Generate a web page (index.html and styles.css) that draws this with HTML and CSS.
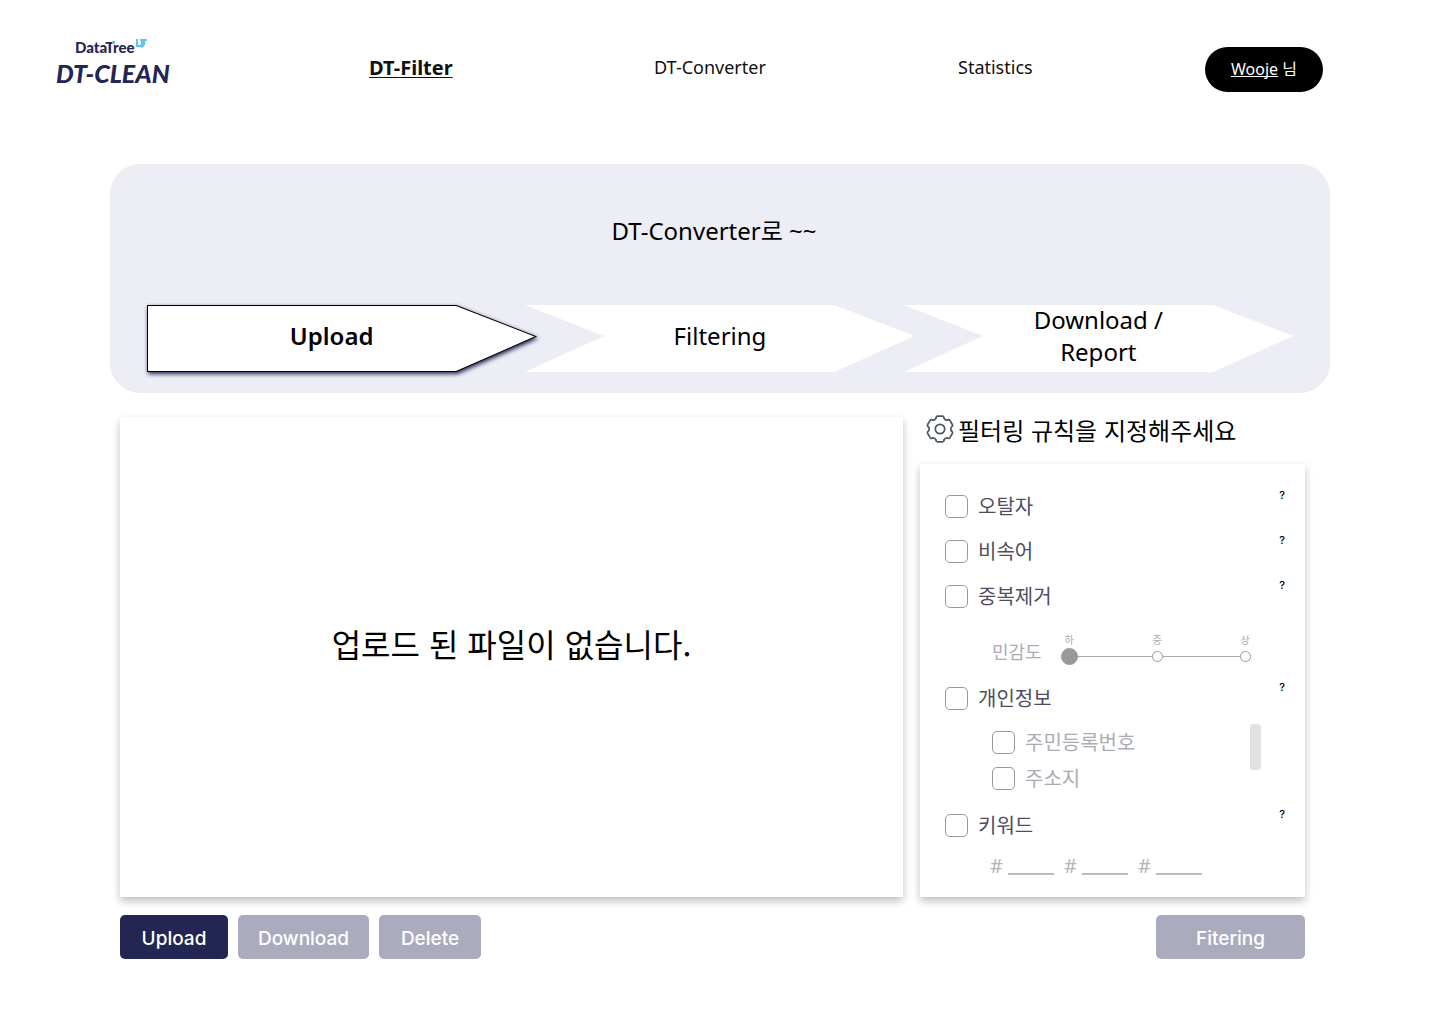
FILE: index.html
```html
<!DOCTYPE html>
<html lang="ko">
<head>
  <meta charset="utf-8">
  <meta name="viewport" content="width=device-width, initial-scale=1">
  <title>DT-Clean</title>
  <link rel="stylesheet" href="styles.css">
</head>
<body>
  <header class="header">
    <a class="logo" href="#">
      <svg width="112" height="48" viewBox="0 0 112 48" role="img" aria-label="DataTree DT-CLEAN">
        <text class="logo-small" x="19" y="16">DataTree</text>
        <text class="logo-large" x="0" y="46">DT-CLEAN</text>
        <path fill="#5bc5ee" d="M56 4h3v3h-3z"/>
        <g fill="none" stroke="#5bc5ee" stroke-width="2">
          <path d="M81 2v7h3q2 0 2-2V4"/>
          <path d="M84 3h7M88 3v4q0 2-3 3"/>
        </g>
      </svg>
    </a>
    <nav class="nav">
      <a class="nav-link nav-link-active" href="#" aria-current="page">DT-Filter</a>
      <a class="nav-link" href="#">DT-Converter</a>
      <a class="nav-link" href="#">Statistics</a>
    </nav>
    <button class="user" type="button"><span class="user-name">Wooje</span> 님</button>
  </header>

  <section class="hero">
    <h1 class="hero-title">DT-Converter로 ~~</h1>
    <ol class="steps">
      <li class="step step-active">
        <svg class="step-shape" viewBox="0 0 389 67" preserveAspectRatio="none" aria-hidden="true"><path d="M.5.5H309L388.5 31.5 309 66.500H.5z"/></svg>
        <span class="step-label">Upload</span>
      </li>
      <li class="step">
        <svg class="step-shape" viewBox="0 0 389 67" preserveAspectRatio="none" aria-hidden="true"><path d="M0 0H309L389 31 309 67H0L79 31z"/></svg>
        <span class="step-label">Filtering</span>
      </li>
      <li class="step">
        <svg class="step-shape" viewBox="0 0 389 67" preserveAspectRatio="none" aria-hidden="true"><path d="M0 0H309L389 31 309 67H0L79 31z"/></svg>
        <span class="step-label">Download /<br>Report</span>
      </li>
    </ol>
  </section>

  <main class="workspace">
    <section class="panel files">
      <p class="files-empty">업로드 된 파일이 없습니다.</p>
    </section>

    <section class="rules">
      <h2 class="rules-title">
        <svg width="28" height="28" viewBox="-14 -14 28 28" fill="none" stroke="#4b5560" stroke-width="1.700" stroke-linecap="round" aria-hidden="true">
          <defs>
            <path id="tooth" d="M-3.970-10.900Q-4.140-12.740-2.270-12.900H2.270Q4.140-12.740 3.970-10.900Q5-8.660 7.450-8.890"/>
          </defs>
          <use href="#tooth"/>
          <use href="#tooth" transform="rotate(60)"/>
          <use href="#tooth" transform="rotate(120)"/>
          <use href="#tooth" transform="rotate(180)"/>
          <use href="#tooth" transform="rotate(240)"/>
          <use href="#tooth" transform="rotate(300)"/>
          <circle r="4.700"/>
        </svg>
        <span class="rules-title-text">필터링 규칙을 지정해주세요</span>
      </h2>
      <form class="panel rules-panel" id="rules-form">
        <div class="rule">
          <label class="check"><input class="check-box" type="checkbox"><span class="check-text">오탈자</span></label>
          <button class="help" type="button" aria-label="오탈자 도움말">?</button>
        </div>
        <div class="rule">
          <label class="check"><input class="check-box" type="checkbox"><span class="check-text">비속어</span></label>
          <button class="help" type="button" aria-label="비속어 도움말">?</button>
        </div>
        <div class="rule">
          <label class="check"><input class="check-box" type="checkbox"><span class="check-text">중복제거</span></label>
          <button class="help" type="button" aria-label="중복제거 도움말">?</button>
        </div>
        <div class="sensitivity" role="radiogroup" aria-labelledby="sensitivity-label">
          <span class="sensitivity-label" id="sensitivity-label">민감도</span>
          <div class="scale">
            <label class="stop">하<input class="stop-dot" type="radio" name="sensitivity" checked></label>
            <label class="stop">중<input class="stop-dot" type="radio" name="sensitivity"></label>
            <label class="stop">상<input class="stop-dot" type="radio" name="sensitivity"></label>
          </div>
        </div>
        <div class="rule">
          <label class="check"><input class="check-box" type="checkbox"><span class="check-text">개인정보</span></label>
          <button class="help" type="button" aria-label="개인정보 도움말">?</button>
        </div>
        <div class="private">
          <div class="private-list">
            <label class="check check-sub"><input class="check-box" type="checkbox"><span class="check-text">주민등록번호</span></label>
            <label class="check check-sub"><input class="check-box" type="checkbox"><span class="check-text">주소지</span></label>
          </div>
          <div class="scroll-thumb"></div>
        </div>
        <div class="rule">
          <label class="check"><input class="check-box" type="checkbox"><span class="check-text">키워드</span></label>
          <button class="help" type="button" aria-label="키워드 도움말">?</button>
        </div>
        <div class="keywords">
          <label class="keyword"><span class="hash">#</span><input class="keyword-input" type="text"></label>
          <label class="keyword"><span class="hash">#</span><input class="keyword-input" type="text"></label>
          <label class="keyword"><span class="hash">#</span><input class="keyword-input" type="text"></label>
        </div>
      </form>
    </section>

    <div class="actions">
      <button class="button button-primary" type="button">Upload</button>
      <button class="button" type="button">Download</button>
      <button class="button" type="button">Delete</button>
      <button class="button button-filter" type="submit" form="rules-form">Fitering</button>
    </div>
  </main>
</body>
</html>
```
FILE: styles.css
```css
* {
  box-sizing: border-box;
}

body {
  margin: 0;
  background: #fff;
  color: #000;
  font-family: "Noto Sans", "Noto Sans CJK KR", sans-serif;
  font-size: 18px;
}

button,
input {
  margin: 0;
  font: inherit;
}

.header {
  display: grid;
  grid-template-columns: 313fr 836fr 118px;
  align-items: center;
  padding: 37px 117px 62px 56px;
}

.logo {
  padding-bottom: 17px;
}

.logo svg {
  display: block;
  overflow: visible;
}

.logo-small {
  fill: #232653;
  font: 900 15px Lato, sans-serif;
}

.logo-large {
  fill: #232653;
  font: italic 900 25px Lato, sans-serif;
}

.nav {
  display: grid;
  grid-template-columns: 285fr 304fr 247fr;
  align-items: center;
  padding-bottom: 5px;
}

.nav-link {
  justify-self: start;
  color: #111;
  text-decoration: none;
}

.nav-link-active {
  font-size: 20px;
  font-weight: 700;
  text-decoration: underline 1px;
  text-underline-offset: 2px;
}

.user {
  height: 45px;
  padding: 0 0 3px;
  border: 0;
  border-radius: 23px;
  background: #000;
  color: #fff;
  font-size: 16px;
}

.user-name {
  text-decoration: underline 1px;
  text-decoration-skip-ink: none;
}

.hero {
  margin: 0 110px;
  padding: 51px 37px 21px;
  border-radius: 30px;
  background: #ededf6;
}

.hero-title {
  margin: 0 0 58px;
  padding-right: 12px;
  font-size: 24px;
  font-weight: 400;
  line-height: 32px;
  text-align: center;
}

.steps {
  display: flex;
  margin: 0;
  padding: 0;
  list-style: none;
}

.step {
  display: grid;
  flex: 1;
  align-items: center;
  font-size: 24px;
  line-height: 32px;
  text-align: center;
}

.step + .step {
  margin-left: -11px;
}

.step-shape,
.step-label {
  grid-area: 1 / 1;
}

.step-shape {
  display: block;
  width: 100%;
  height: 67px;
  overflow: visible;
  fill: #fff;
}

.step-label {
  z-index: 1;
  align-self: center;
  margin: -2px 0 3px;
}

.step-active {
  font-weight: 600;
}

.step-active .step-shape {
  stroke: #000;
  filter: drop-shadow(1px 2px 2px #232653);
}

.step-active .step-label {
  padding-right: 20px;
}

.workspace {
  display: grid;
  grid-template-columns: minmax(0, 1fr) 385px;
  column-gap: 17px;
  row-gap: 18px;
  margin: 24px 135px 64px 120px;
}

.panel {
  background: #fff;
  box-shadow: 0 4px 8px rgba(0, 0, 0, 0.25);
}

.files {
  display: flex;
  align-items: center;
  justify-content: center;
  padding-bottom: 28px;
}

.files-empty {
  margin: 0;
  font-family: "Noto Sans CJK KR", sans-serif;
  font-size: 32px;
}

.rules-title {
  display: flex;
  align-items: flex-start;
  gap: 4px;
  height: 28px;
  margin: 0 0 19px;
  padding-left: 6px;
  font-family: "Noto Sans CJK KR", sans-serif;
  font-size: 24px;
  font-weight: 400;
  line-height: 26px;
}

.rules-title svg {
  margin-top: -2px;
}

.rules-panel {
  padding: 25px 20px 22px 25px;
}

.rule {
  display: flex;
  align-items: stretch;
  justify-content: space-between;
  height: 35px;
}

.rule + .rule {
  margin-top: 10px;
}

.check {
  display: flex;
  align-items: center;
  gap: 10px;
  color: #4f4d5f;
  font-family: "Noto Sans CJK KR", sans-serif;
  font-size: 20px;
}

.check-text {
  padding-bottom: 2px;
  line-height: 21px;
}

.check-sub {
  color: #acabb5;
}

.check-box {
  appearance: none;
  width: 23px;
  height: 23px;
  border: 1px solid #999;
  border-radius: 5px;
  background: #fff;
}

.check-box:checked {
  background: #232653;
}

.help {
  align-self: flex-start;
  padding: 0;
  border: 0;
  background: none;
  color: #000;
  font-family: Inter, sans-serif;
  font-size: 11px;
  font-weight: 500;
  line-height: 12px;
}

.sensitivity {
  display: flex;
  align-items: flex-end;
  gap: 19px;
  padding: 20px 0 16px 47px;
  color: #acabb5;
  font-family: "Noto Sans CJK KR", sans-serif;
}

.sensitivity-label {
  line-height: 28px;
}

.scale {
  display: flex;
  justify-content: space-between;
  width: 193px;
  background: linear-gradient(#aaa, #aaa) center bottom 8px / 176px 1px no-repeat;
}

.stop {
  display: flex;
  flex-direction: column;
  align-items: center;
  gap: 2px;
  width: 17px;
  font-size: 10px;
  line-height: 12px;
}

.stop-dot {
  appearance: none;
  width: 11px;
  height: 11px;
  margin: 3px;
  border: 1px solid #999;
  border-radius: 50%;
  background: #fff;
}

.stop-dot:checked {
  width: 17px;
  height: 17px;
  margin: 0;
  background: #999;
}

.private {
  display: flex;
  align-items: flex-start;
  justify-content: space-between;
  padding: 8px 24px 18px 47px;
}

.private-list {
  display: flex;
  flex-direction: column;
  gap: 13px;
  padding-top: 7px;
}

.scroll-thumb {
  width: 11px;
  height: 46px;
  border-radius: 3px;
  background: #e1e2e4;
}

.keywords {
  display: flex;
  gap: 10px;
  padding: 10px 0 0 45px;
}

.keyword {
  display: flex;
  height: 22px;
}

.hash {
  width: 18px;
  color: #b5b5b5;
  font-size: 20px;
  line-height: 26px;
}

.keyword-input {
  width: 46px;
  height: 22px;
  padding: 0;
  border: 0;
  border-bottom: 2px solid #bbb;
  border-radius: 0;
  background: none;
  font-size: 14px;
}

.actions {
  display: flex;
  grid-column: 1 / -1;
  gap: 10px;
}

.button {
  min-width: 102px;
  height: 44px;
  padding: 2px 20px 0;
  border: 0;
  border-radius: 5px;
  background: #ababbe;
  color: #fff;
  font-family: Inter, sans-serif;
  font-size: 19px;
  font-weight: 500;
}

.button-primary {
  min-width: 108px;
  background: #232653;
}

.button-filter {
  min-width: 149px;
  margin-left: auto;
}
```
